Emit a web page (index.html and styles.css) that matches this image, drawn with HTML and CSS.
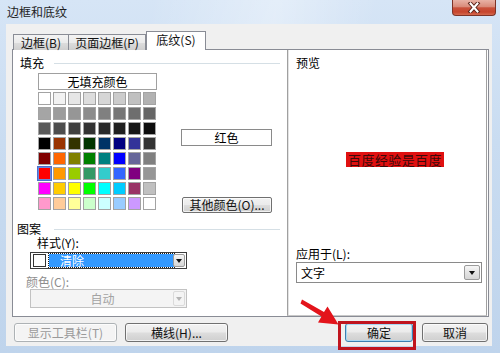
FILE: index.html
```html
<!DOCTYPE html>
<html lang="zh-CN">
<head>
<meta charset="utf-8">
<title>边框和底纹</title>
<link rel="stylesheet" href="styles.css">
</head>
<body>
<div class="window">
  <div class="titlebar">
    <span class="title">边框和底纹</span>
    <div class="close">
      <svg width="14" height="11" viewBox="0 0 14 11"><path d="M3.5 1.5 L10.5 9.5 M10.5 1.5 L3.5 9.5" stroke="#5a241b" stroke-width="4" stroke-linecap="square"/><path d="M3.5 1.5 L10.5 9.5 M10.5 1.5 L3.5 9.5" stroke="#ffffff" stroke-width="2" stroke-linecap="square"/></svg>
    </div>
  </div>
  <div class="client">
    <div class="tabs">
      <div class="tab t1">边框(B)</div>
      <div class="tab t2">页面边框(P)</div>
      <div class="tab t3 active">底纹(S)</div>
    </div>
    <div class="panel">
      <div class="left">
        <div class="group-head fill-head"><span>填充</span><i class="rule"></i></div>
        <div class="fill-row">
          <div class="palette">
            <div class="nofill">无填充颜色</div>
            <div class="grid">
              <i style="background:#ffffff"></i><i style="background:#f2f2f2"></i><i style="background:#e6e6e6"></i><i style="background:#dddddd"></i><i style="background:#d6d6d6"></i><i style="background:#cccccc"></i><i style="background:#c0c0c0"></i><i style="background:#b2b2b2"></i>
              <i style="background:#a5a5a5"></i><i style="background:#9c9c9c"></i><i style="background:#969696"></i><i style="background:#8c8c8c"></i><i style="background:#808080"></i><i style="background:#777777"></i><i style="background:#6e6e6e"></i><i style="background:#666666"></i>
              <i style="background:#595959"></i><i style="background:#4d4d4d"></i><i style="background:#404040"></i><i style="background:#333333"></i><i style="background:#292929"></i><i style="background:#1f1f1f"></i><i style="background:#161616"></i><i style="background:#0d0d0d"></i>
              <i style="background:#000000"></i><i style="background:#993300"></i><i style="background:#333300"></i><i style="background:#003300"></i><i style="background:#003366"></i><i style="background:#000080"></i><i style="background:#333399"></i><i style="background:#333333"></i>
              <i style="background:#800000"></i><i style="background:#ff6600"></i><i style="background:#808000"></i><i style="background:#008000"></i><i style="background:#008080"></i><i style="background:#0000ff"></i><i style="background:#666699"></i><i style="background:#808080"></i>
              <i class="picked" style="background:#ff0000"></i><i style="background:#ff9900"></i><i style="background:#99cc00"></i><i style="background:#339966"></i><i style="background:#33cccc"></i><i style="background:#3366ff"></i><i style="background:#800080"></i><i style="background:#969696"></i>
              <i style="background:#ff00ff"></i><i style="background:#ffcc00"></i><i style="background:#ffff00"></i><i style="background:#00ff00"></i><i style="background:#00ffff"></i><i style="background:#00ccff"></i><i style="background:#993366"></i><i style="background:#c0c0c0"></i>
              <i style="background:#ff99cc"></i><i style="background:#ffcc99"></i><i style="background:#ffff99"></i><i style="background:#ccffcc"></i><i style="background:#ccffff"></i><i style="background:#99ccff"></i><i style="background:#cc99ff"></i><i style="background:#ffffff"></i>
            </div>
          </div>
          <div class="side">
            <div class="colorname">红色</div>
            <div class="btn more">其他颜色(O)...</div>
          </div>
        </div>
        <div class="group-head pattern-head"><span>图案</span><i class="rule"></i></div>
        <div class="lbl style-lbl">样式(Y):</div>
        <div class="combo style-combo">
          <span class="swatch"></span><span class="sel">清除</span><span class="arrow"><b></b></span>
        </div>
        <div class="lbl color-lbl">颜色(C):</div>
        <div class="combo color-combo">
          <span class="val">自动</span><span class="arrow"><b></b></span>
        </div>
      </div>
      <div class="right">
        <div class="preview-lbl">预览</div>
        <div class="sample">百度经验是百度</div>
        <div class="lbl apply-lbl">应用于(L):</div>
        <div class="combo apply-combo">
          <span class="val">文字</span><span class="arrow"><b></b></span>
        </div>
      </div>
    </div>
    <div class="buttons">
      <div class="btn wide disabled">显示工具栏(T)</div>
      <div class="btn wide hline">横线(H)...</div>
      <div class="btn ok">确定</div>
      <div class="btn cancel">取消</div>
    </div>
  </div>
</div>
<div class="highlight"></div>
<svg class="pointer" width="50" height="34" viewBox="295 295 50 34">
  <polygon points="300.5,303.5 321.5,316.5 318,322.5 338.5,324.5 327.5,306.5 324,312 302,299.5" fill="#e3141b"/>
</svg>
</body>
</html>
```

FILE: styles.css
```css
* { box-sizing: border-box; }

html, body {
  margin: 0;
  padding: 0;
}

body {
  width: 500px;
  height: 353px;
  overflow: hidden;
  position: relative;
  font-family: "Noto Sans CJK SC", "Liberation Sans", sans-serif;
  font-size: 12px;
  color: #000;
  background: linear-gradient(180deg, #d6e5f6 0%, #c9dcf1 40%, #bfd4ec 100%);
}

.window {
  display: flex;
  flex-direction: column;
  height: 353px;
}

/* title bar */
.titlebar {
  height: 24px;
  display: flex;
  align-items: center;
  padding-left: 7px;
  position: relative;
  background: linear-gradient(100deg, rgba(255,255,255,0) 30%, rgba(255,255,255,0.35) 55%, rgba(255,255,255,0) 75%);
}

.title {
  font-size: 12px;
  line-height: 14px;
  color: #1e1e1e;
  margin-top: -1px;
}

.close {
  position: absolute;
  left: 452px;
  top: 0;
  width: 44px;
  height: 16px;
  border: 1px solid #7d3327;
  border-top: none;
  border-radius: 0 0 4px 4px;
  background: linear-gradient(180deg, #e8b2a6 0%, #d98b7a 45%, #c9523c 52%, #c7452d 80%, #d46a4f 100%);
  display: flex;
  align-items: center;
  justify-content: center;
}

/* client area */
.client {
  margin: 0 8px 0 6px;
  height: 322px;
  background: #f0f0f0;
  padding: 7px 3px 0 6px;
}

.tabs {
  display: flex;
  align-items: flex-end;
  height: 19px;
  margin-bottom: -1px;
  position: relative;
  z-index: 1;
}

.tab {
  height: 16px;
  border: 1px solid #898c95;
  border-bottom: none;
  background: linear-gradient(180deg, #f3f3f3 0%, #ebebeb 50%, #dddddd 51%, #cfcfcf 100%);
  display: flex;
  align-items: center;
  justify-content: center;
  font-size: 12px;
  line-height: 14px;
  color: #111;
}

.t1 { margin-left: 1px; width: 56px; }
.t2 { margin-left: -1px; width: 78px; }
.t3 { margin-left: 0; width: 60px; }

.tab.active {
  height: 19px;
  background: #ffffff;
  padding-bottom: 2px;
}

.panel {
  height: 268px;
  border: 1px solid #898c95;
  background: #ffffff;
  display: flex;
}

/* left column */
.left {
  width: 274px;
}

.group-head {
  display: flex;
  align-items: center;
  height: 14px;
  line-height: 14px;
}

.fill-head { margin-top: 6px; padding-left: 7px; }
.pattern-head { margin-top: 9px; padding-left: 4px; }

.rule {
  flex: 1;
  height: 1px;
  background: #d5dfe5;
  margin-left: 10px;
  margin-right: 7px;
}
.pattern-head .rule { margin-left: 13px; }

.fill-row {
  display: flex;
  margin-top: 3px;
}

.palette {
  margin-left: 25px;
  width: 119px;
}

.nofill {
  height: 17px;
  border: 1px solid #a0a0a0;
  background: #ffffff;
  display: flex;
  align-items: center;
  justify-content: center;
  font-size: 12px;
  line-height: 14px;
}

.grid {
  margin-top: 2px;
  display: grid;
  grid-template-columns: repeat(8, 13px);
  grid-auto-rows: 13px;
  gap: 2px;
}

.grid i {
  display: block;
  border: 1px solid #a3a3a3;
}

.grid i.picked {
  outline: 1px solid #4a6fd0;
  outline-offset: 0;
  border-color: #6a86d8;
}

.side {
  margin-left: 24px;
  width: 91px;
  padding-top: 56px;
}

.colorname {
  height: 17px;
  border: 1px solid #8a8a8a;
  background: #fff;
  display: flex;
  align-items: center;
  justify-content: center;
  line-height: 14px;
}

.btn {
  height: 19px;
  border: 1px solid #707070;
  border-radius: 3px;
  background: linear-gradient(180deg, #f2f2f2 0%, #ebebeb 48%, #dddddd 52%, #cfcfcf 100%);
  display: flex;
  align-items: center;
  justify-content: center;
  font-size: 12px;
  line-height: 14px;
  color: #111;
  box-shadow: inset 0 0 0 1px rgba(255,255,255,0.7);
}

.more {
  margin-top: 51px;
  margin-left: 1px;
  width: 90px;
  height: 16px;
  border-radius: 2px;
}

.lbl {
  height: 14px;
  line-height: 14px;
  font-size: 12px;
}

.style-lbl { margin-left: 24px; }
.color-lbl { margin-left: 13px; margin-top: 6px; color: #8d8d8d; }

.combo {
  position: relative;
  display: flex;
  align-items: center;
  border: 1px solid #7a7a7a;
  background: #fff;
}

.arrow {
  position: absolute;
  right: 1px;
  top: 1px;
  bottom: 1px;
  width: 12px;
  border: 1px solid #9b9b9b;
  border-radius: 2px;
  background: linear-gradient(180deg, #f6f6f6 0%, #e4e4e4 50%, #d6d6d6 100%);
  display: flex;
  align-items: center;
  justify-content: center;
}

.arrow b {
  width: 0;
  height: 0;
  border-left: 3.5px solid transparent;
  border-right: 3.5px solid transparent;
  border-top: 4px solid #111;
}

.style-combo {
  margin-top: 2px;
  margin-left: 17px;
  width: 157px;
  height: 17px;
  border-color: #3c3c3c;
}

.swatch {
  width: 13px;
  height: 13px;
  margin-left: 2px;
  border: 1px solid #333;
  background: #fff;
}

.sel {
  margin-left: 3px;
  width: 125px;
  height: 13px;
  background: #3399ff;
  color: #fff;
  outline: 1px dotted #1a1a1a;
  padding-left: 11px;
  line-height: 13px;
  font-size: 12px;
}

.color-combo {
  margin-left: 17px;
  width: 157px;
  height: 19px;
  border-color: #c2c2c2;
  background: #f4f4f4;
  justify-content: center;
  padding-right: 12px;
  color: #a3a3a3;
}

.color-combo .arrow {
  border-color: #dadada;
  background: #f4f4f4;
}
.color-combo .arrow b { border-top-color: #b4b4b4; }

.val { line-height: 14px; }

/* right column */
.right {
  width: 200px;
  margin-left: 0;
  border-left: 1px solid #a0a0a0;
  border-right: 1px solid #a0a0a0;
  border-bottom: 1px solid #c8c8c8;
  box-shadow: inset 1px 0 0 #e3e3e3;
}

.preview-lbl {
  margin-top: 6px;
  padding-left: 8px;
  height: 14px;
  line-height: 14px;
}

.sample {
  margin-top: 82px;
  margin-left: 58px;
  width: 98px;
  height: 15px;
  background: #e01010;
  color: #3c0a0a;
  font-size: 13px;
  line-height: 15px;
  letter-spacing: 0.4px;
  white-space: nowrap;
  text-align: center;
}

.apply-lbl {
  margin-top: 80px;
  margin-left: 8px;
}

.apply-combo {
  margin-top: 1px;
  margin-left: 8px;
  width: 186px;
  height: 21px;
  border-color: #8a8a8a;
  padding-left: 4px;
}

.apply-combo .arrow {
  width: 16px;
  top: 2px;
  bottom: 2px;
  right: 1px;
}

/* bottom buttons */
.buttons {
  display: flex;
  margin-top: 6px;
}

.btn.wide { width: 103px; }
.btn.disabled {
  margin-left: 2px;
  border-color: #adb2b5;
  background: #f4f4f4;
  color: #9a9a9a;
}
.btn.hline { margin-left: 8px; }

.btn.ok {
  margin-left: auto;
  width: 68px;
  border-color: #3c7fb1;
  box-shadow: inset 0 0 0 1px #a8d8f4;
}

.btn.cancel {
  margin-left: 9px;
  margin-right: 1px;
  width: 66px;
}

/* overlays */
.highlight {
  position: absolute;
  left: 338px;
  top: 321px;
  width: 78px;
  height: 29px;
  border: 3px solid #c0141e;
}

.pointer {
  position: absolute;
  left: 295px;
  top: 295px;
}
```
